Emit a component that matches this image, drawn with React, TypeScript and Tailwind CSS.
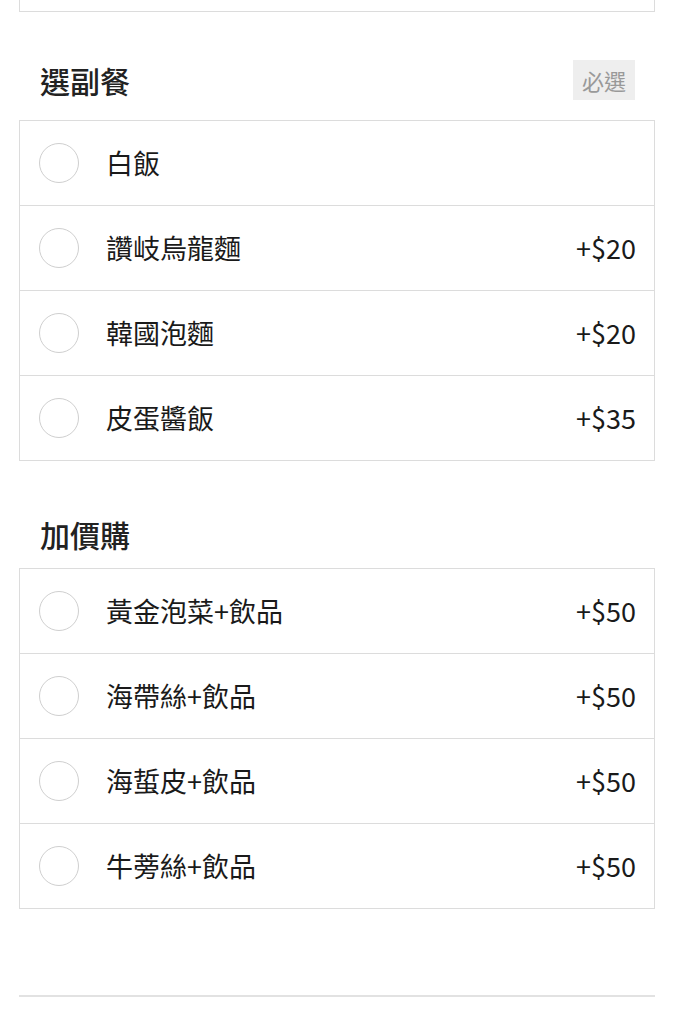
import React from "react"

type Option = {
  name: string
  price?: number
}

const sides: Option[] = [
  { name: "白飯" },
  { name: "讚岐烏龍麵", price: 20 },
  { name: "韓國泡麵", price: 20 },
  { name: "皮蛋醬飯", price: 35 },
]

const extras: Option[] = [
  { name: "黃金泡菜+飲品", price: 50 },
  { name: "海帶絲+飲品", price: 50 },
  { name: "海蜇皮+飲品", price: 50 },
  { name: "牛蒡絲+飲品", price: 50 },
]

function OptionList({ items }: { items: Option[] }) {
  return (
    <div className="border border-[#dcdcdc]">
      {items.map((o, i) => (
        <div
          key={o.name}
          className={
            "flex items-center pl-[19px] pr-[18px] " +
            (i < items.length - 1 ? "h-[85px] border-b border-[#dcdcdc]" : "h-[84px]")
          }
        >
          <span className="h-[40px] w-[40px] shrink-0 rounded-full border border-[#cfcfcf]" />
          <span className="ml-[27px] flex-1 text-[27px] text-[#1a1a1a]">{o.name}</span>
          {o.price != null && <span className="text-[27px] text-[#1a1a1a]">+${o.price}</span>}
        </div>
      ))}
    </div>
  )
}

export default function App() {
  return (
    <div
      className="min-h-[1024px] bg-white"
      style={{ fontFamily: '"Noto Sans CJK TC", "Noto Sans", sans-serif' }}
    >
      <div className="ml-[19px] w-[636px]">
        <div className="h-[12px] border-x border-b border-[#dcdcdc]" />

        {/* 選副餐 */}
        <div className="mt-[48px] flex h-[40px] items-center justify-between pl-[21px] pr-[20px]">
          <h2 className="text-[30px] font-medium text-[#222]">選副餐</h2>
          <span className="flex h-[40px] w-[62px] items-center justify-center bg-[#eeeeee] text-[22px] text-[#999]">
            必選
          </span>
        </div>
        <div className="mt-[20px]">
          <OptionList items={sides} />
        </div>

        {/* 加價購 */}
        <div className="mt-[53px] flex h-[40px] items-center pl-[21px]">
          <h2 className="text-[30px] font-medium text-[#222]">加價購</h2>
        </div>
        <div className="mt-[14px]">
          <OptionList items={extras} />
        </div>

        <div className="mt-[86px] h-[2px] bg-[#e2e2e2]" />
      </div>
    </div>
  )
}
